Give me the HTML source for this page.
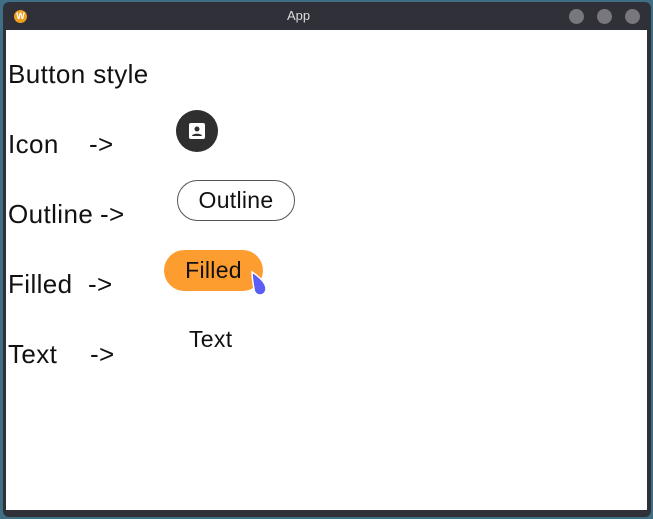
<!DOCTYPE html>
<html><head><style>
html,body{margin:0;padding:0;}
body{width:653px;height:519px;background:#3f6f85;position:relative;overflow:hidden;font-family:"Liberation Sans",sans-serif;}
.win{position:absolute;left:3px;top:2px;width:648px;height:515px;background:#2f3038;border-radius:6px;}
.content{position:absolute;left:6px;top:30px;width:641px;height:480px;background:#fff;}
.t{position:absolute;font-size:26px;letter-spacing:0.4px;color:#111;line-height:1;white-space:nowrap;}
.dot{position:absolute;top:9px;width:15px;height:15px;border-radius:50%;background:#77777d;}
</style></head><body>
<div class="win"></div>
<div style="position:absolute;left:14px;top:10px;width:13px;height:13px;border-radius:50%;background:#f0a020;color:#fff;font-size:9px;text-align:center;line-height:13px;font-weight:bold">W</div>
<div style="position:absolute;left:287px;top:8px;color:#ddd;font-size:13px">App</div>
<div class="dot" style="left:569px"></div><div class="dot" style="left:597px"></div><div class="dot" style="left:625px"></div>
<div class="content"></div>
<div class="t" style="left:8px;top:61px">Button style</div>
<div class="t" style="left:8px;top:131px">Icon</div><div class="t" style="left:89px;top:131px">-&gt;</div>
<div class="t" style="left:8px;top:201px">Outline</div><div class="t" style="left:100px;top:201px">-&gt;</div>
<div class="t" style="left:8px;top:271px">Filled</div><div class="t" style="left:88px;top:271px">-&gt;</div>
<div class="t" style="left:8px;top:341px">Text</div><div class="t" style="left:90px;top:341px">-&gt;</div>
<div style="position:absolute;left:176px;top:110px;width:42px;height:42px;border-radius:50%;background:#2f2f2f"></div>
<svg style="position:absolute;left:187px;top:121px" width="20" height="20" viewBox="0 0 20 20"><rect x="2" y="2" width="16" height="16" rx="2" fill="#fff"/><circle cx="10" cy="8" r="2.5" fill="#2f2f2f"/><path d="M5 15c0-3 10-3 10 0z" fill="#2f2f2f"/></svg>
<div style="position:absolute;left:177px;top:180px;width:116px;height:39px;border:1px solid #555;border-radius:21px;font-size:23px;letter-spacing:0.3px;text-align:center;line-height:39px;color:#111">Outline</div>
<div style="position:absolute;left:164px;top:250px;width:99px;height:41px;border-radius:21px;background:#fd9c2f;font-size:23px;letter-spacing:0.3px;text-align:center;line-height:40px;color:#111">Filled</div>
<svg style="position:absolute;left:248px;top:270px" width="22" height="28" viewBox="0 0 22 28"><path d="M4 2 C10 6 18 12 18 19 A6 6 0 0 1 6 19 C5 13 4 8 4 2z" fill="#5a5ef5" stroke="#fff" stroke-width="1.5"/></svg>
<div style="position:absolute;left:189px;top:326px;font-size:23px;letter-spacing:0.3px;color:#111">Text</div>
</body></html>
